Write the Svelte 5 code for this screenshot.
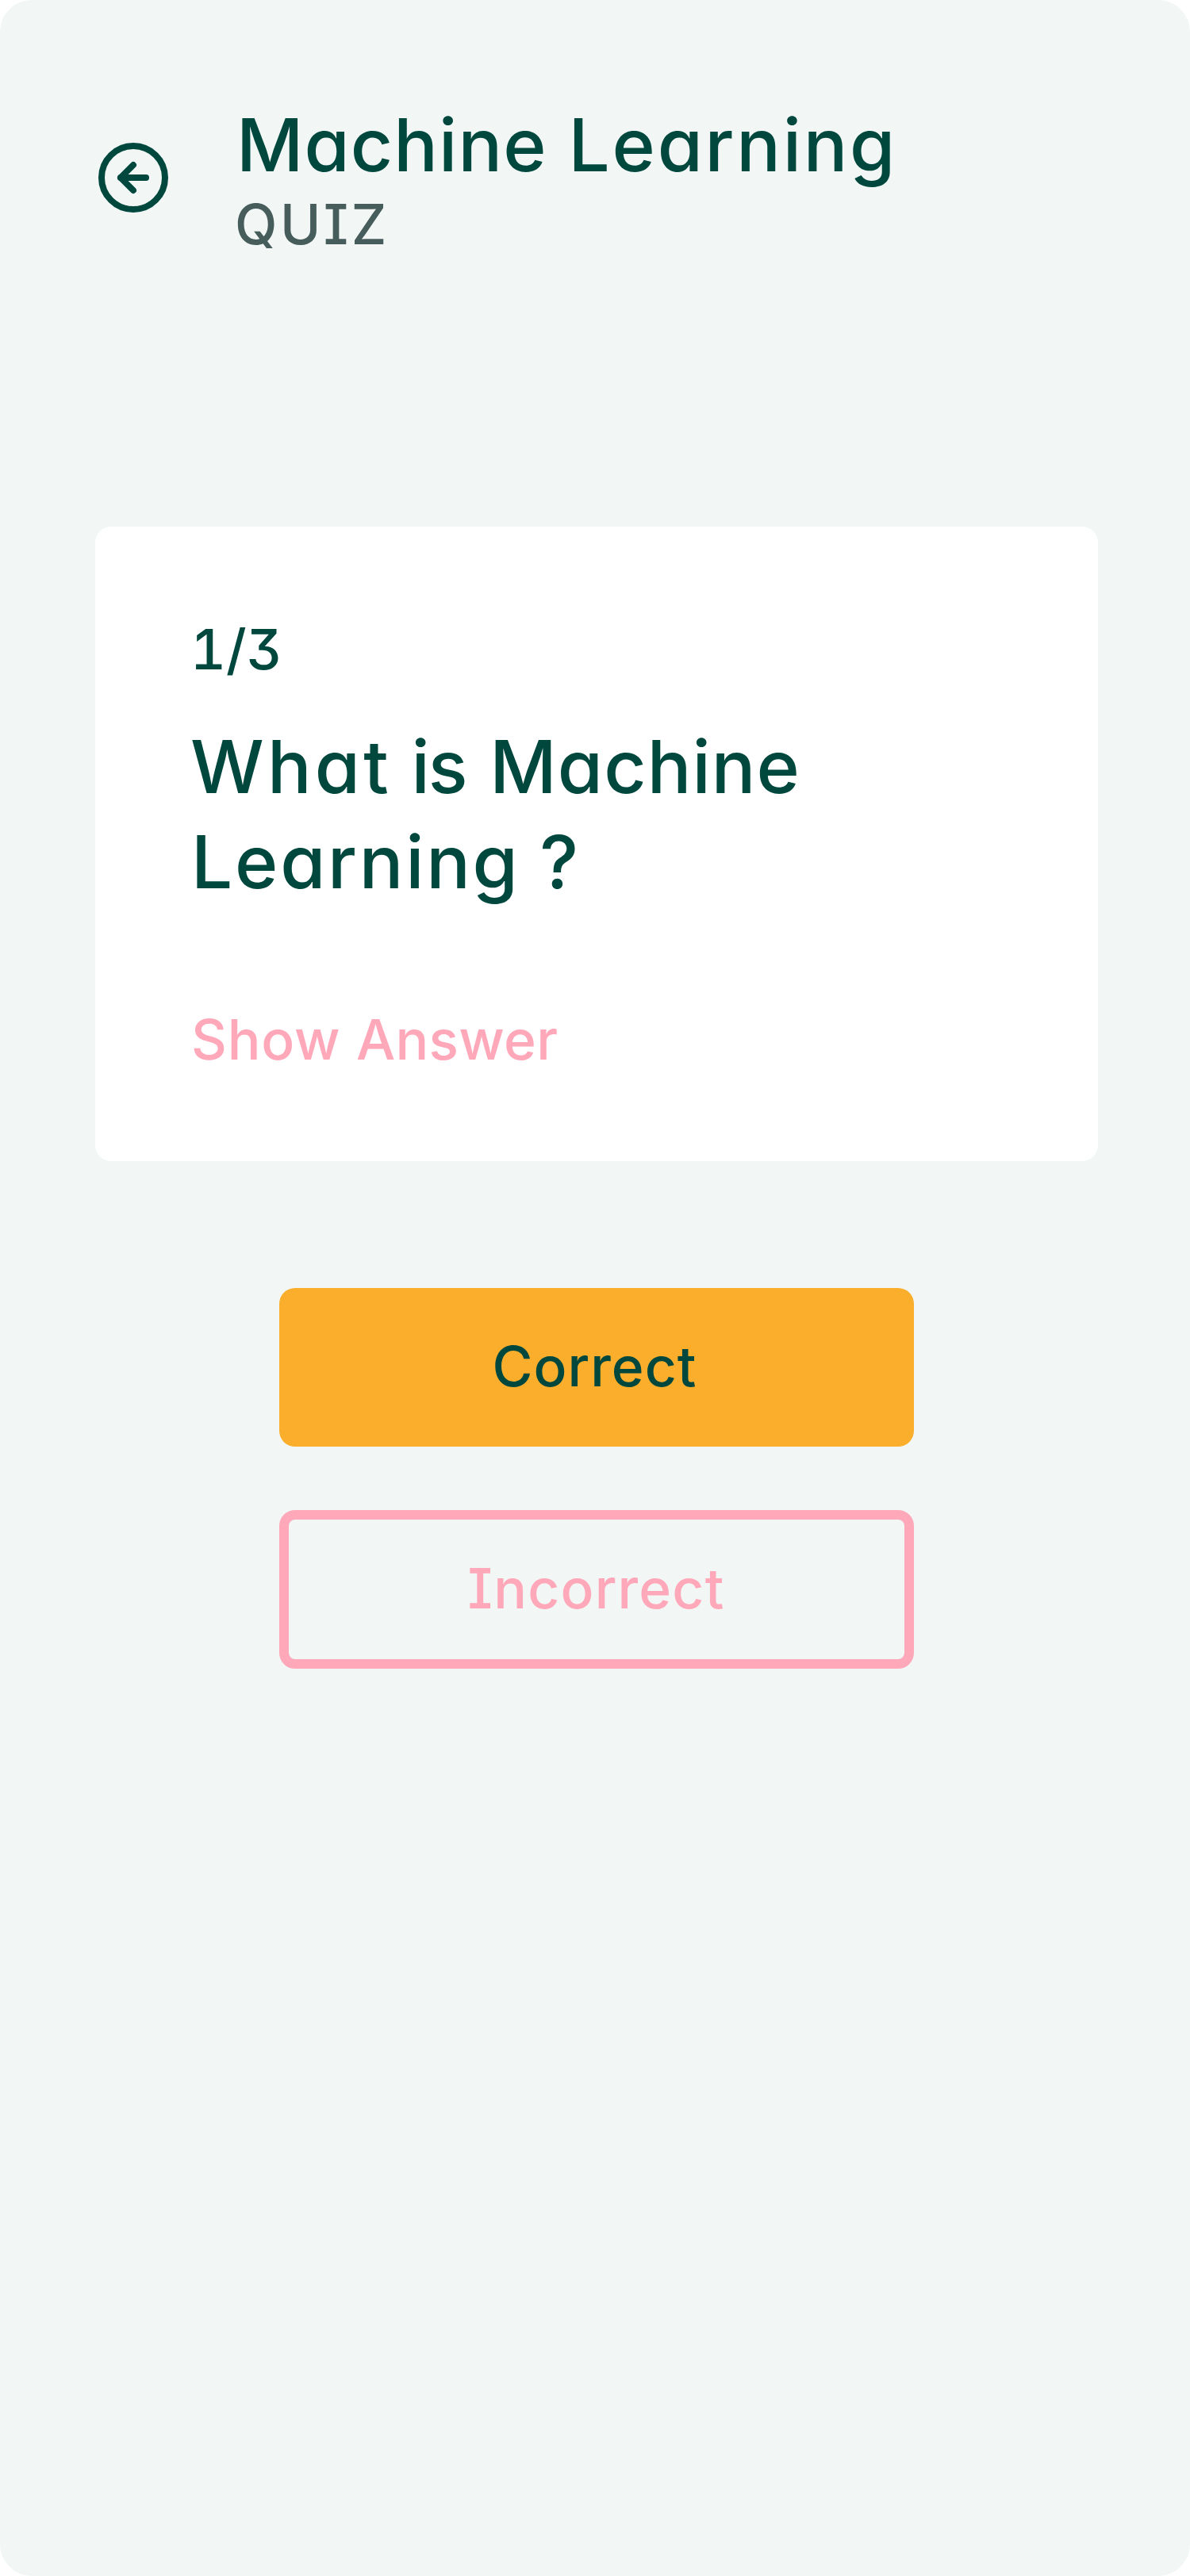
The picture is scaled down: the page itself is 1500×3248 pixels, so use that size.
<script>
  let { onBack = () => {}, onAnswer = () => {} } = $props();
</script>

<main class="screen">
  <header class="header">
    <button class="back" aria-label="Back" onclick={onBack}>
      <svg viewBox="0 0 24 24" width="96" height="96" fill="none" stroke="currentColor" stroke-width="2" stroke-linecap="round" stroke-linejoin="round">
        <circle cx="12" cy="12" r="10" />
        <path d="M12 8L8 12L12 16" />
        <path d="M16 12H8" />
      </svg>
    </button>
    <div class="heading">
      <h1><span class="machine">Machine</span> <span class="learning">Learning</span></h1>
      <p class="kind">QUIZ</p>
    </div>
  </header>

  <section class="card">
    <p class="progress">1/3</p>
    <h2>
      <span class="what">What</span> <span class="is">is</span> <span class="machine after-is">Machine</span><br />
      <span class="learning second-line">Learning</span> <span>?</span>
    </h2>
    <button class="reveal"><span class="show">Show</span> <span class="answer">Answer</span></button>
  </section>

  <div class="actions">
    <button class="choice correct" onclick={() => onAnswer(true)}>Correct</button>
    <button class="choice incorrect" onclick={() => onAnswer(false)}>Incorrect</button>
  </div>
</main>

<style>
  :global(body) {
    margin: 0;
    background: #ffffff;
  }

  .screen {
    box-sizing: border-box;
    width: 1500px;
    height: 3248px;
    padding: 124px 116px 0 120px;
    border-radius: 40px;
    background: #f2f7f5;
    color: #00473e;
    font-family: Inter, "Liberation Sans", sans-serif;
    font-weight: 460;
    /* single-storey a, capital I with serifs, flat-topped 3 */
    font-feature-settings: "cv11", "cv08", "cv09";
  }

  h1,
  h2,
  p {
    margin: 0;
    font-weight: inherit;
  }

  button {
    margin: 0;
    padding: 0;
    border: 0;
    background: none;
    color: inherit;
    font: inherit;
    font-feature-settings: inherit;
    cursor: pointer;
  }

  .header {
    display: flex;
    align-items: flex-start;
    gap: 80px;
    height: 540px;
  }

  .back {
    display: flex;
    align-items: center;
    width: 96px;
    height: 200px;
  }

  .back svg {
    display: block;
  }

  h1 {
    padding: 0 0 1px 2px;
    font-size: 92.5px;
    line-height: 116px;
    word-spacing: 2.2px;
    white-space: nowrap;
  }

  .machine {
    letter-spacing: 1.1px;
  }

  .learning {
    letter-spacing: 2.75px;
  }

  .kind,
  .progress,
  .reveal,
  .choice {
    font-size: 69.5px;
    line-height: 84px;
  }

  .kind {
    color: #475d5b;
    letter-spacing: 3.5px;
  }

  .card {
    box-sizing: border-box;
    height: 800px;
    padding: 113px 120px 0;
    border-radius: 20px;
    background: #ffffff;
  }

  .progress {
    font-feature-settings: "tnum", "cv09";
  }

  h2 {
    margin-top: 45px;
    font-size: 92.5px;
    line-height: 120px;
    white-space: nowrap;
  }

  .what {
    letter-spacing: 4.2px;
  }

  .is {
    letter-spacing: -2px;
  }

  .after-is {
    margin-left: 5px;
  }

  .second-line {
    margin-left: 1px;
  }

  .reveal {
    display: block;
    margin-top: 123px;
    padding-left: 1px;
    color: #ffa8ba;
    white-space: nowrap;
  }

  .show {
    letter-spacing: 0.8px;
  }

  .answer {
    margin-left: 1px;
    letter-spacing: 0.3px;
  }

  .actions {
    display: flex;
    flex-direction: column;
    align-items: center;
    gap: 80px;
    margin-top: 160px;
  }

  .choice {
    box-sizing: border-box;
    width: 800px;
    height: 200px;
    border-radius: 20px;
  }

  .correct {
    padding: 0 5px 2px 0;
    background: #faae2b;
    letter-spacing: 1px;
  }

  .incorrect {
    padding: 0 1px 2px 0;
    border: 12px solid #ffa8ba;
    color: #ffa8ba;
    letter-spacing: 1.2px;
  }
</style>
